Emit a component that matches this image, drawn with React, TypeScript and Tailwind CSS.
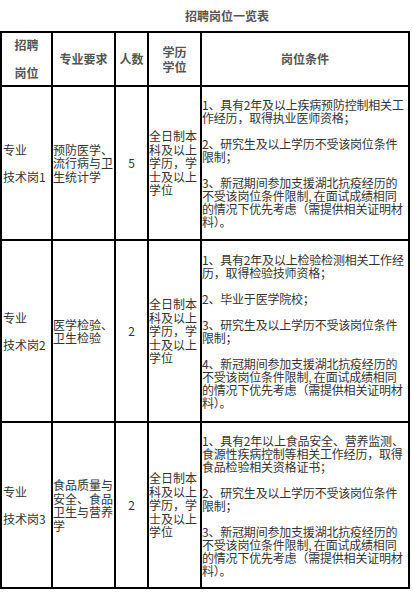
import React from "react";

const font = { fontFamily: '"Noto Sans CJK SC", "Noto Sans", sans-serif' };

type Row = {
  post: string;
  major: string[];
  num: string;
  edu: string[];
  cond: string[][];
};

const rows: Row[] = [
  {
    post: "技术岗1",
    major: ["预防医学、", "流行病与卫", "生统计学"],
    num: "5",
    edu: ["全日制本", "科及以上", "学历，学", "士及以上", "学位"],
    cond: [
      ["1、具有2年及以上疾病预防控制相关工", "作经历，取得执业医师资格；"],
      ["2、研究生及以上学历不受该岗位条件", "限制；"],
      [
        "3、新冠期间参加支援湖北抗疫经历的",
        "不受该岗位条件限制, 在面试成绩相同",
        "的情况下优先考虑（需提供相关证明材",
        "料）。",
      ],
    ],
  },
  {
    post: "技术岗2",
    major: ["医学检验、", "卫生检验"],
    num: "2",
    edu: ["全日制本", "科及以上", "学历，学", "士及以上", "学位"],
    cond: [
      ["1、具有2年及以上检验检测相关工作经", "历，取得检验技师资格；"],
      ["2、毕业于医学院校；"],
      ["3、研究生及以上学历不受该岗位条件", "限制；"],
      [
        "4、新冠期间参加支援湖北抗疫经历的",
        "不受该岗位条件限制, 在面试成绩相同",
        "的情况下优先考虑（需提供相关证明材",
        "料）。",
      ],
    ],
  },
  {
    post: "技术岗3",
    major: ["食品质量与", "安全、食品", "卫生与营养", "学"],
    num: "2",
    edu: ["全日制本", "科及以上", "学历，学", "士及以上", "学位"],
    cond: [
      [
        "1、具有2年以上食品安全、营养监测、",
        "食源性疾病控制等相关工作经历，取得",
        "食品检验相关资格证书；",
      ],
      ["2、研究生及以上学历不受该岗位条件", "限制；"],
      [
        "3、新冠期间参加支援湖北抗疫经历的",
        "不受该岗位条件限制, 在面试成绩相同",
        "的情况下优先考虑（需提供相关证明材",
        "料）。",
      ],
    ],
  },
];

function Lines({ lines, className }: { lines: string[]; className?: string }) {
  return (
    <div className={className}>
      {lines.map((l, i) => (
        <div key={i} className="whitespace-nowrap">
          {l}
        </div>
      ))}
    </div>
  );
}

export default function App() {
  return (
    <div className="w-[413px] h-[592px] bg-white overflow-hidden" style={font}>
      <div className="h-[31px] flex items-center pl-[185px] text-[12px] font-bold text-[#555] leading-none">
        招聘岗位一览表
      </div>
      <div className="w-[410px] bg-black p-[2px] grid grid-cols-[49px_61px_31px_51px_206px] grid-rows-[52px_152px_180px_164px] gap-[2px] text-[12px]">
        {/* header */}
        <div className="bg-white flex flex-col items-center justify-center font-bold text-[#555] leading-[28px]">
          <div>招聘</div>
          <div>岗位</div>
        </div>
        <div className="bg-white flex items-center justify-center font-bold text-[#555]">
          专业要求
        </div>
        <div className="bg-white flex items-center justify-center font-bold text-[#555]">
          人数
        </div>
        <div className="bg-white flex flex-col items-center justify-center font-bold text-[#555] leading-[15px]">
          <div>学历</div>
          <div>学位</div>
        </div>
        <div className="bg-white flex items-center justify-center font-bold text-[#555]">
          岗位条件
        </div>

        {rows.map((r, ri) => (
          <React.Fragment key={ri}>
            <div className="bg-white flex flex-col justify-center pl-[1px] text-[#333] leading-[27px]">
              <div>专业</div>
              <div className="whitespace-nowrap">{r.post}</div>
            </div>
            <div className="bg-white flex items-center text-[#333] leading-[13.5px]">
              <Lines lines={r.major} />
            </div>
            <div className="bg-white flex items-center justify-center text-[#333]">
              {r.num}
            </div>
            <div className="bg-white flex items-center text-[#333] leading-[13.5px]">
              <Lines lines={r.edu} />
            </div>
            <div className="bg-white flex flex-col justify-center gap-[13px] text-[#333] leading-[13px] tracking-[-0.2px]">
              {r.cond.map((p, pi) => (
                <Lines key={pi} lines={p} />
              ))}
            </div>
          </React.Fragment>
        ))}
      </div>
    </div>
  );
}
